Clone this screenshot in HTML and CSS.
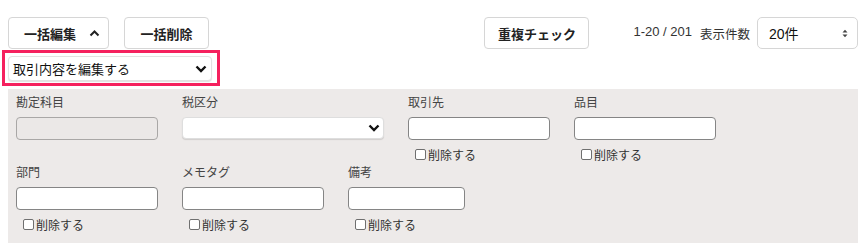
FILE: index.html
```html
<!DOCTYPE html>
<html lang="ja">
<head>
<meta charset="utf-8">
<link rel="stylesheet" href="styles.css">
</head>
<body>
<div class="page">
  <div class="toolbar">
    <div class="left-group">
      <button class="btn btn-edit"><span>一括編集</span>
        <svg class="chev-up" width="11" height="8" viewBox="0 0 11 8"><path d="M1.5 6.5 L5.5 2.5 L9.5 6.5" fill="none" stroke="#222" stroke-width="2"/></svg>
      </button>
      <button class="btn btn-del">一括削除</button>
    </div>
    <div class="right-group">
      <button class="btn btn-dup">重複チェック</button>
      <span class="count"><span class="range">1-20 / 201</span><span class="per">表示件数</span></span>
      <div class="per-select">
        <span>20件</span>
        <svg width="6" height="9" viewBox="0 0 6 9"><path d="M0.5 3.5 L3 0.8 L5.5 3.5 Z M0.5 5.5 L3 8.2 L5.5 5.5 Z" fill="#444"/></svg>
      </div>
    </div>
  </div>

  <div class="highlight">
    <div class="mode-select">
      <span>取引内容を編集する</span>
      <svg width="12" height="8" viewBox="0 0 12 8"><path d="M1.5 1.5 L6 6 L10.5 1.5" fill="none" stroke="#111" stroke-width="2.4"/></svg>
    </div>
  </div>

  <div class="panel">
    <div class="row">
      <div class="field">
        <div class="label">勘定科目</div>
        <div class="input w142 disabled"></div>
      </div>
      <div class="field">
        <div class="label">税区分</div>
        <div class="tax-select">
          <svg width="12" height="8" viewBox="0 0 12 8"><path d="M1.5 1.5 L6 6 L10.5 1.5" fill="none" stroke="#111" stroke-width="2.4"/></svg>
        </div>
      </div>
      <div class="field">
        <div class="label">取引先</div>
        <div class="input w142"></div>
        <label class="check"><input type="checkbox"><span>削除する</span></label>
      </div>
      <div class="field">
        <div class="label">品目</div>
        <div class="input w142"></div>
        <label class="check"><input type="checkbox"><span>削除する</span></label>
      </div>
    </div>
    <div class="row">
      <div class="field">
        <div class="label">部門</div>
        <div class="input w142"></div>
        <label class="check"><input type="checkbox"><span>削除する</span></label>
      </div>
      <div class="field">
        <div class="label">メモタグ</div>
        <div class="input w142"></div>
        <label class="check"><input type="checkbox"><span>削除する</span></label>
      </div>
      <div class="field">
        <div class="label">備考</div>
        <div class="input w117"></div>
        <label class="check"><input type="checkbox"><span>削除する</span></label>
      </div>
    </div>
  </div>
</div>
</body>
</html>
```
FILE: styles.css
```css
* { box-sizing: border-box; }
html, body { margin: 0; padding: 0; background: #fff; }
body {
  font-family: "Liberation Sans", "Noto Sans CJK JP", sans-serif;
  color: #333;
}
.page {
  width: 850px;
  margin-left: 8px;
  padding-top: 17px;
}
.toolbar {
  display: flex;
  align-items: center;
  height: 32px;
}
.left-group { display: flex; gap: 15px; }
.right-group {
  margin-left: auto;
  display: flex;
  align-items: center;
}
.btn {
  height: 32px;
  background: #fff;
  border: 1px solid #d6d6d6;
  border-radius: 4px;
  font-family: "Liberation Sans", "Noto Sans CJK JP", sans-serif;
  font-size: 13px;
  font-weight: bold;
  color: #222;
  padding: 0 16px;
  display: flex;
  align-items: center;
  white-space: nowrap;
}
.btn-edit { width: 101px; padding: 0 0 0 15px; gap: 13px; }
.btn-del { width: 85px; justify-content: center; padding: 0; }
.btn-dup { width: 105px; justify-content: center; padding: 0; }
.chev-up { display: block; flex: none; }
.count {
  margin-left: 44px;
  font-size: 13px;
  color: #333;
  display: flex;
  gap: 8px;
  white-space: nowrap;
}
.per { font-size: 12.5px; }
.per-select {
  margin-left: 7px;
  width: 101px;
  height: 32px;
  border: 1px solid #d6d6d6;
  border-radius: 5px;
  display: flex;
  align-items: center;
  justify-content: space-between;
  padding: 0 9px 0 11px;
  font-size: 14px;
  color: #111;
}
.highlight {
  margin-left: -6px;
  margin-top: 1px;
  width: 218px;
  height: 36px;
  border: 3px solid #f5215e;
  padding: 3px 5px 1px 3px;
}
.mode-select {
  width: 204px;
  height: 25px;
  border: 1px solid #e2e2e2;
  border-radius: 4px;
  box-shadow: 0 1px 1px rgba(0,0,0,0.12);
  background: #fff;
  display: flex;
  align-items: center;
  justify-content: space-between;
  padding: 0 4px 0 4px;
  font-size: 13px;
  color: #111;
}
.panel {
  margin-top: 3px;
  width: 850px;
  height: 154px;
  background: #edeae9;
  padding: 6px 8px 0 8px;
  display: flex;
  flex-direction: column;
  gap: 3px;
}
.row { display: flex; gap: 24px; }
.field { display: flex; flex-direction: column; }
.label {
  font-size: 12px;
  line-height: 16px;
  height: 16px;
  color: #444;
  margin-bottom: 6px;
}
.input {
  height: 23px;
  background: #fff;
  border: 1px solid #858585;
  border-radius: 4px;
}
.input.disabled {
  background: #ebe8e7;
  border-color: #a9a7a6;
}
.w142 { width: 142px; }
.w117 { width: 117px; }
.tax-select {
  width: 202px;
  height: 22px;
  background: #fff;
  border: 1px solid #dedede;
  border-radius: 4px;
  box-shadow: 0 1px 1px rgba(0,0,0,0.12);
  display: flex;
  align-items: center;
  justify-content: flex-end;
  padding-right: 3px;
}
.check {
  display: flex;
  align-items: center;
  margin-top: 6px;
  margin-left: 7px;
  height: 16px;
  font-size: 12px;
  color: #333;
}
.check input {
  -webkit-appearance: none;
  appearance: none;
  width: 11px;
  height: 11px;
  margin: 0 2px 0 0;
  border: 1px solid #6f6f6f;
  border-radius: 2px;
  background: #fff;
}
```
